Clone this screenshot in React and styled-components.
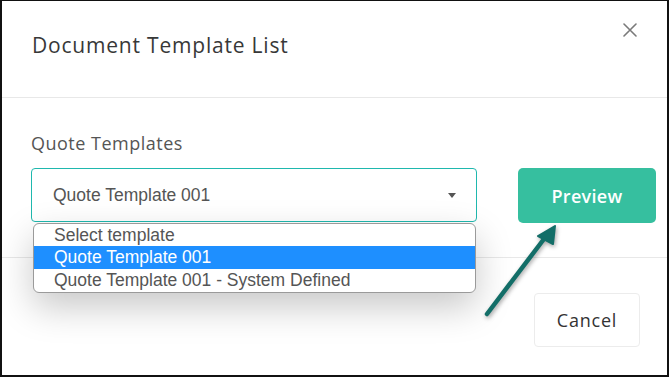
import styled, { createGlobalStyle } from "styled-components";

const GlobalStyle = createGlobalStyle`
  html, body {
    margin: 0;
    padding: 0;
    background: #ffffff;
  }
  * {
    box-sizing: border-box;
  }
`;

const options = [
  "Select template",
  "Quote Template 001",
  "Quote Template 001 - System Defined",
];

export default function App() {
  return (
    <>
      <GlobalStyle />
      <Frame>
        <Header>
          <Title>Document Template List</Title>
          <CloseButton aria-label="close">
            <svg width="14" height="14" viewBox="0 0 14 14">
              <path d="M1 1 L13 13 M13 1 L1 13" stroke="#7a7a7a" strokeWidth="1.6" strokeLinecap="round" />
            </svg>
          </CloseButton>
        </Header>
        <Body>
          <Label>Quote Templates</Label>
          <Row>
            <SelectWrap>
              <SelectBox>
                <SelectText>Quote Template 001</SelectText>
                <Caret />
              </SelectBox>
              <OptionList>
                {options.map((o, i) => (
                  <Option key={o} $active={i === 1}>
                    {o}
                  </Option>
                ))}
              </OptionList>
            </SelectWrap>
            <PrimaryButton>Preview</PrimaryButton>
          </Row>
        </Body>
        <Footer>
          <GhostButton>Cancel</GhostButton>
        </Footer>
        <Arrow width="670" height="377" viewBox="0 0 670 377">
          <line x1="487" y1="314" x2="547" y2="235" stroke="#136e68" strokeWidth="4.5" strokeLinecap="round" />
          <polygon points="555,226 538,236 553,244" fill="#136e68" stroke="#136e68" strokeWidth="2" strokeLinejoin="round" />
        </Arrow>
      </Frame>
    </>
  );
}

const Frame = styled.div`
  position: relative;
  width: 669px;
  height: 377px;
  border: 2px solid #111;
  border-top-width: 1px;
  background: #fff;
  overflow: hidden;
  display: flex;
  flex-flow: column;
`;

const Header = styled.div`
  height: 97px;
  flex-shrink: 0;
  display: flex;
  justify-content: space-between;
  align-items: flex-start;
  padding: 0 30px;
  border-bottom: 1px solid #e8e8e8;
`;

const Title = styled.h2`
  margin: 29px 0 0;
  font-family: "Open Sans", sans-serif;
  font-weight: 400;
  font-size: 21px;
  letter-spacing: 0.8px;
  line-height: 30px;
  color: #383838;
`;

const CloseButton = styled.button`
  margin-top: 22px;
  padding: 0;
  border: none;
  background: none;
  width: 14px;
  height: 14px;
  display: flex;
`;

const Body = styled.div`
  height: 160px;
  flex-shrink: 0;
  padding: 33px 10px 0 29px;
  border-bottom: 1px solid #e8e8e8;
`;

const Label = styled.div`
  font-family: "Open Sans", sans-serif;
  font-size: 18px;
  letter-spacing: 0.5px;
  line-height: 24px;
  color: #555;
`;

const Row = styled.div`
  display: flex;
  gap: 41px;
  margin-top: 13px;
`;

const SelectWrap = styled.div`
  position: relative;
  width: 446px;
`;

const SelectBox = styled.div`
  height: 54px;
  border: 1px solid #1fb8ae;
  border-radius: 4px;
  display: flex;
  align-items: center;
  justify-content: space-between;
  padding: 0 20px 0 21px;
  background: #fff;
`;

const SelectText = styled.span`
  font-family: "Liberation Sans", Arial, sans-serif;
  font-size: 17.5px;
  color: #555;
`;

const Caret = styled.span`
  width: 0;
  height: 0;
  border-left: 4.5px solid transparent;
  border-right: 4.5px solid transparent;
  border-top: 5px solid #555;
`;

const OptionList = styled.div`
  position: absolute;
  top: 55px;
  left: 2px;
  right: 1px;
  background: #fff;
  border: 1px solid #9a9a9a;
  border-radius: 6px;
  padding: 0 0 1px;
  box-shadow: 0 14px 36px rgba(0, 0, 0, 0.22);
  overflow: hidden;
  z-index: 2;
`;

const Option = styled.div`
  height: 22.3px;
  padding-left: 20px;
  font-family: "Liberation Sans", Arial, sans-serif;
  font-size: 17.5px;
  line-height: 22px;
  white-space: nowrap;
  color: ${(p) => (p.$active ? "#fff" : "#555")};
  background: ${(p) => (p.$active ? "#1e8fff" : "transparent")};
`;

const PrimaryButton = styled.button`
  width: 138px;
  height: 55px;
  border: none;
  border-radius: 5px;
  background: #36bf9f;
  color: #fff;
  font-family: "Open Sans", sans-serif;
  font-weight: 600;
  font-size: 18px;
  letter-spacing: 0.3px;
`;

const Footer = styled.div`
  display: flex;
  justify-content: flex-end;
  padding: 35px 27px 0 0;
`;

const GhostButton = styled.button`
  width: 106px;
  height: 54px;
  border: 1px solid #ececec;
  border-radius: 4px;
  background: #fff;
  color: #333;
  font-family: "Open Sans", sans-serif;
  font-size: 18px;
  letter-spacing: 0.8px;
`;

const Arrow = styled.svg`
  position: absolute;
  top: -1px;
  left: -2px;
  pointer-events: none;
  z-index: 3;
  filter: drop-shadow(1px 2px 2px rgba(0, 0, 0, 0.35));
`;
